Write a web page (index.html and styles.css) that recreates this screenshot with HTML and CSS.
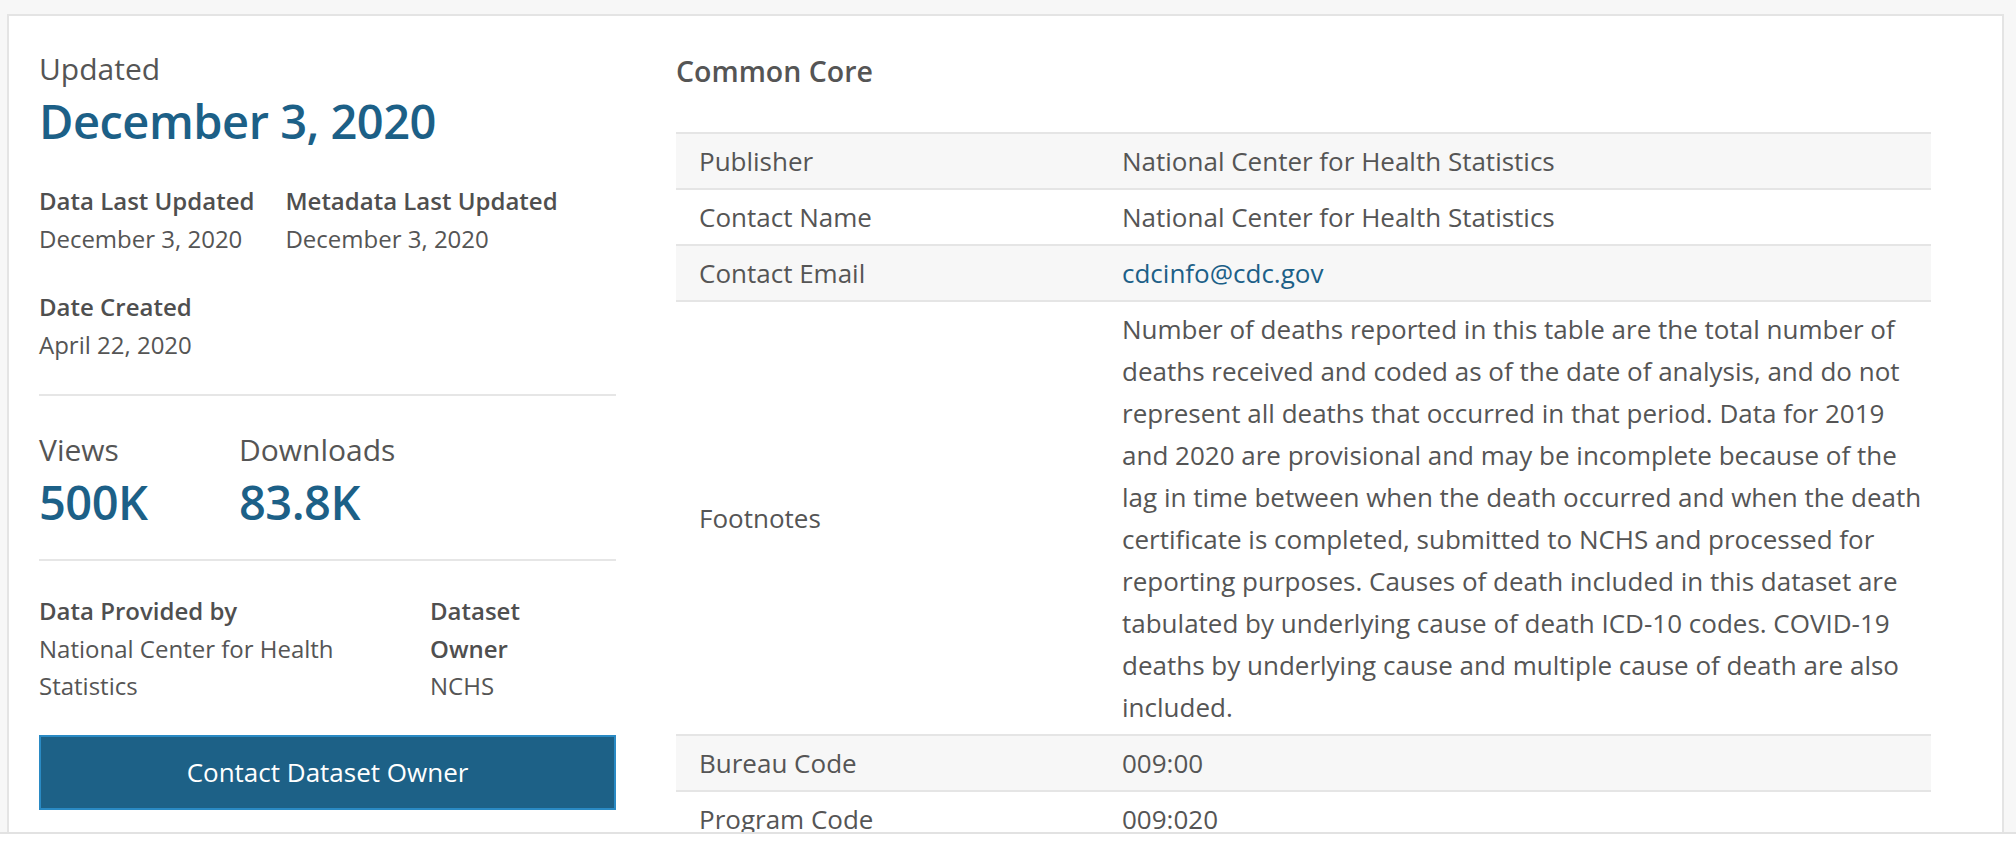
FILE: index.html
```html
<!DOCTYPE html>
<html lang="en">
<head>
<meta charset="utf-8">
<title>Dataset details</title>
<link rel="stylesheet" href="styles.css">
</head>
<body>
<div class="card">
  <div class="layout">
    <aside class="side">
      <div class="stat-label">Updated</div>
      <div class="stat-value">December 3, 2020</div>

      <div class="meta-row">
        <div class="meta-item">
          <div class="meta-label">Data Last Updated</div>
          <div class="meta-value">December 3, 2020</div>
        </div>
        <div class="meta-item">
          <div class="meta-label">Metadata Last Updated</div>
          <div class="meta-value">December 3, 2020</div>
        </div>
      </div>
      <div class="meta-row">
        <div class="meta-item">
          <div class="meta-label">Date Created</div>
          <div class="meta-value">April 22, 2020</div>
        </div>
      </div>

      <hr class="sep">

      <div class="stats">
        <div class="stat">
          <div class="stat-label">Views</div>
          <div class="stat-value">500K</div>
        </div>
        <div class="stat">
          <div class="stat-label">Downloads</div>
          <div class="stat-value">83.8K</div>
        </div>
      </div>

      <hr class="sep sep-2">

      <div class="owners">
        <div class="meta-item">
          <div class="meta-label">Data Provided by</div>
          <div class="meta-value">National Center for Health Statistics</div>
        </div>
        <div class="meta-item">
          <div class="meta-label">Dataset Owner</div>
          <div class="meta-value">NCHS</div>
        </div>
      </div>

      <button class="contact-btn" type="button">Contact Dataset Owner</button>
    </aside>

    <section class="main">
      <h2 class="section-title">Common Core</h2>
      <table class="meta-table">
        <tbody>
          <tr><th>Publisher</th><td>National Center for Health Statistics</td></tr>
          <tr><th>Contact Name</th><td>National Center for Health Statistics</td></tr>
          <tr><th>Contact Email</th><td><a class="link" href="#">cdcinfo@cdc.gov</a></td></tr>
          <tr><th>Footnotes</th><td>Number of deaths reported in this table are the total number of deaths received and coded as of the date of analysis, and do not represent all deaths that occurred in that period. Data for 2019 and 2020 are provisional and may be incomplete because of the lag in time between when the death occurred and when the death certificate is completed, submitted to NCHS and processed for reporting purposes. Causes of death included in this dataset are tabulated by underlying cause of death ICD-10 codes. COVID-19 deaths by underlying cause and multiple cause of death are also included.</td></tr>
          <tr><th>Bureau Code</th><td>009:00</td></tr>
          <tr><th>Program Code</th><td>009:020</td></tr>
        </tbody>
      </table>
    </section>
  </div>
</div>
<div class="bottom-bar"></div>
</body>
</html>
```

FILE: styles.css
```css
html, body {
  margin: 0;
  padding: 0;
  background: #f7f7f7;
  height: 846px;
  overflow: hidden;
}

body {
  font-family: "Open Sans", "Liberation Sans", sans-serif;
  color: #555555;
}

.card {
  margin: 14px 12px 0 7px;
  background: #ffffff;
  border: 2px solid #e4e4e4;
  border-bottom: none;
  padding: 33px 30px 40px 30px;
  min-height: 900px;
}

.layout {
  display: grid;
  grid-template-columns: 577px 1255px;
  column-gap: 60px;
  align-items: start;
}

/* ---------- side column ---------- */
.stat-label {
  font-size: 30px;
  line-height: 40px;
  font-weight: 400;
  color: #555555;
}

.stat-value {
  margin-top: 2px;
  font-size: 47px;
  line-height: 60px;
  font-weight: 600;
  color: #1c6087;
  letter-spacing: -0.5px;
}

.meta-row {
  display: flex;
  gap: 31px;
  margin-top: 31px;
}

.meta-row + .meta-row {
  margin-top: 31px;
}

.meta-label {
  font-size: 24px;
  line-height: 37.5px;
  font-weight: 600;
  color: #4f4f4f;
}

.meta-value {
  font-size: 24px;
  line-height: 37.5px;
  font-weight: 400;
  color: #555555;
}

.sep {
  border: none;
  border-top: 2px solid #e6e6e6;
  margin: 31px 0 0 0;
  height: 0;
}

.stats {
  display: flex;
  gap: 0;
  margin-top: 34px;
}

.stat {
  width: 200px;
}

.sep-2 {
  margin-top: 27px;
}

.owners {
  display: grid;
  grid-template-columns: 361px 150px;
  column-gap: 30px;
  margin-top: 31px;
}

.contact-btn {
  display: block;
  width: 100%;
  height: 75px;
  margin-top: 30px;
  background: #1d6187;
  border: 2px solid #2a8ac4;
  color: #ffffff;
  font-family: "Open Sans", "Liberation Sans", sans-serif;
  font-size: 26px;
  font-weight: 400;
  cursor: pointer;
}

/* ---------- main column ---------- */
.section-title {
  margin: 4px 0 0 0;
  font-size: 28.5px;
  line-height: 36px;
  font-weight: 600;
  color: #555555;
}

.meta-table {
  margin-top: 43px;
  width: 100%;
  border-collapse: collapse;
  table-layout: fixed;
  font-size: 26px;
  line-height: 42px;
}

.meta-table tr:nth-child(odd) {
  background: #f7f7f7;
}

.meta-table th,
.meta-table td {
  border-top: 2px solid #e5e5e5;
  padding: 6px 0 6px 23px;
  text-align: left;
  font-weight: 400;
  vertical-align: middle;
  color: #555555;
}

.meta-table th {
  width: 400px;
}

.link {
  color: #1c6087;
  text-decoration: none;
}

.bottom-bar {
  position: fixed;
  left: 0;
  right: 0;
  bottom: 0;
  height: 12px;
  background: #ffffff;
  border-top: 2px solid #e2e2e2;
}
```
